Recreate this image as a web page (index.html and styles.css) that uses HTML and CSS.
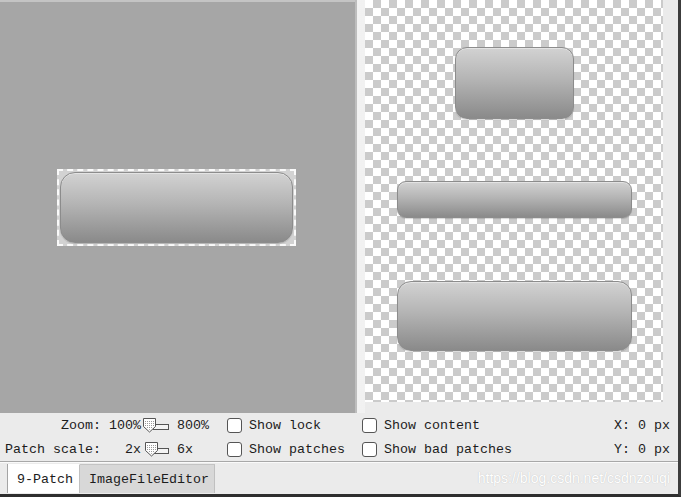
FILE: index.html
```html
<!DOCTYPE html>
<html>
<head>
    <title>9-Patch</title>
    <link rel="stylesheet" href="styles.css">
</head>
<body>
    <div id="window">
        <div class="editor">
            <div class="canvas">
                <div class="patch-frame">
                    <div class="patch big"></div>
                </div>
            </div>
            <div class="divider"></div>
            <div class="preview">
                <div class="checker">
                    <div class="patch square"></div>
                    <div class="patch wide"></div>
                    <div class="patch tall"></div>
                </div>
            </div>
        </div>

        <div class="controls">
            <span class="label">Zoom:</span>
            <span class="min">100%</span>
            <svg class="slider" width="30" height="16" viewBox="0 0 30 16">
                <defs>
                    <pattern id="dots1" width="2" height="2" patternUnits="userSpaceOnUse">
                        <rect width="1" height="1" fill="#9a9a9a"/>
                    </pattern>
                </defs>
                <rect x="12.5" y="7.5" width="15" height="5" fill="#f4f4f4" stroke="#555"/>
                <path d="M2.5 1.5 H14.5 V9.5 L8.5 15 L2.5 9.5 Z" fill="#fff" stroke="#555"/>
                <path d="M4 3 H13 V9 L8.5 13 L4 9 Z" fill="url(#dots1)"/>
            </svg>
            <span class="max">800%</span>
            <label class="check"><span class="box"></span>Show lock</label>
            <label class="check"><span class="box"></span>Show content</label>
            <span class="coord">X: 0 px</span>

            <span class="label">Patch scale:</span>
            <span class="min">2x</span>
            <svg class="slider" width="30" height="16" viewBox="0 0 30 16">
                <defs>
                    <pattern id="dots2" width="2" height="2" patternUnits="userSpaceOnUse">
                        <rect width="1" height="1" fill="#9a9a9a"/>
                    </pattern>
                </defs>
                <rect x="12.5" y="7.5" width="15" height="5" fill="#f4f4f4" stroke="#555"/>
                <path d="M4.5 1.5 H16.5 V9.5 L10.5 15 L4.5 9.5 Z" fill="#fff" stroke="#555"/>
                <path d="M6 3 H15 V9 L10.5 13 L6 9 Z" fill="url(#dots2)"/>
            </svg>
            <span class="max">6x</span>
            <label class="check"><span class="box"></span>Show patches</label>
            <label class="check"><span class="box"></span>Show bad patches</label>
            <span class="coord">Y: 0 px</span>
        </div>

        <div class="tabs">
            <div class="tab-gap"></div>
            <div class="tab active">9-Patch</div>
            <div class="tab">ImageFileEditor</div>
            <span class="watermark">https://blog.csdn.net/csdnzouqi</span>
        </div>
    </div>
</body>
</html>
```

FILE: styles.css
```css
body {
    margin: 0;
    background-color: #ebebeb;
    overflow: hidden;
}
#window {
    width: 678px;
    height: 494px;
    border-right: 3px solid #3c3c3c;
    border-bottom: 3px solid #2e2e2e;
    background-color: #ebebeb;
    font-family: "Liberation Mono", "DejaVu Sans Mono", monospace;
    font-size: 13.33px;
    color: #1c1c1c;
    display: flex;
    flex-direction: column;
}
.editor {
    display: flex;
    height: 413px;
}
.canvas {
    width: 355px;
    background-color: #a6a6a6;
    border-top: 2px solid #c4c4c4;
    box-sizing: border-box;
    display: flex;
    justify-content: center;
    align-items: center;
}
.patch-frame {
    border: 2px dashed #fafafa;
    background-color: #d2d2d2;
    padding: 1px;
    margin-left: -2px;
}
.divider {
    width: 10px;
    box-sizing: border-box;
    border-left: 2px solid #bdbdbd;
    background-color: #d6d6d6;
    background-image: radial-gradient(circle, #f2f2f2 0.7px, transparent 0.9px);
    background-size: 2px 2px;
}
.preview {
    flex: 1;
    padding: 0 15px 11px 0;
}
.checker {
    height: 402px;
    background-color: #ffffff;
    background-image:
        linear-gradient(45deg, #cbcbcb 25%, transparent 25%, transparent 75%, #cbcbcb 75%),
        linear-gradient(45deg, #cbcbcb 25%, transparent 25%, transparent 75%, #cbcbcb 75%);
    background-size: 16px 16px;
    background-position: 0 0, 8px 8px;
    display: flex;
    flex-direction: column;
    align-items: center;
}
.patch {
    box-sizing: border-box;
    border: 1px solid #8c8c8c;
    background: linear-gradient(#d2d2d2, #b4b4b4 45%, #8a8a8a);
    box-shadow: inset 0 1px 0 rgba(255, 255, 255, 0.4), 0 1px 1px rgba(0, 0, 0, 0.15);
}
.big {
    width: 233px;
    height: 71px;
    border-radius: 15px;
}
.square {
    width: 119px;
    height: 72px;
    border-radius: 12px;
    margin-top: 47px;
}
.wide {
    width: 235px;
    height: 37px;
    border-radius: 9px;
    margin-top: 62px;
}
.tall {
    width: 235px;
    height: 70px;
    border-radius: 14px;
    margin-top: 63px;
}
.controls {
    height: 48px;
    display: grid;
    grid-template-columns: 101px 40px 30px 57px 135px 1fr auto;
    grid-template-rows: 24px 24px;
    align-items: center;
    padding-right: 8px;
    border-bottom: 1px solid #a8a8a8;
    box-shadow: 0 1px 0 #fafafa;
    white-space: pre;
}
.label,
.min {
    text-align: right;
}
.max {
    padding-left: 6px;
}
.slider {
    display: block;
}
.check {
    display: flex;
    align-items: center;
    gap: 7px;
    margin-left: -1px;
}
.box {
    width: 13px;
    height: 13px;
    border: 1px solid #555;
    border-radius: 3px;
    background-color: #fff;
}
.coord {
    text-align: right;
}
.tabs {
    position: relative;
    display: flex;
    align-items: stretch;
    margin-top: 2px;
    height: 29px;
}
.tab-gap {
    width: 7px;
    border-right: 1px solid #a4a4a4;
}
.tab {
    display: flex;
    align-items: center;
    padding: 0 5px 0 9px;
    background-color: #d8d8d8;
    border-top: 1px solid #c4c4c4;
    border-right: 1px solid #c0c0c0;
}
.tab.active {
    background-color: #ffffff;
    border-top-color: #ffffff;
    padding: 0 6px 0 9px;
}
.watermark {
    position: absolute;
    right: 8px;
    top: 6px;
    font-family: "Liberation Sans", Arial, sans-serif;
    font-size: 14px;
    color: #ffffff;
    text-shadow: 0 0 1px #b8b8b8;
}
```
